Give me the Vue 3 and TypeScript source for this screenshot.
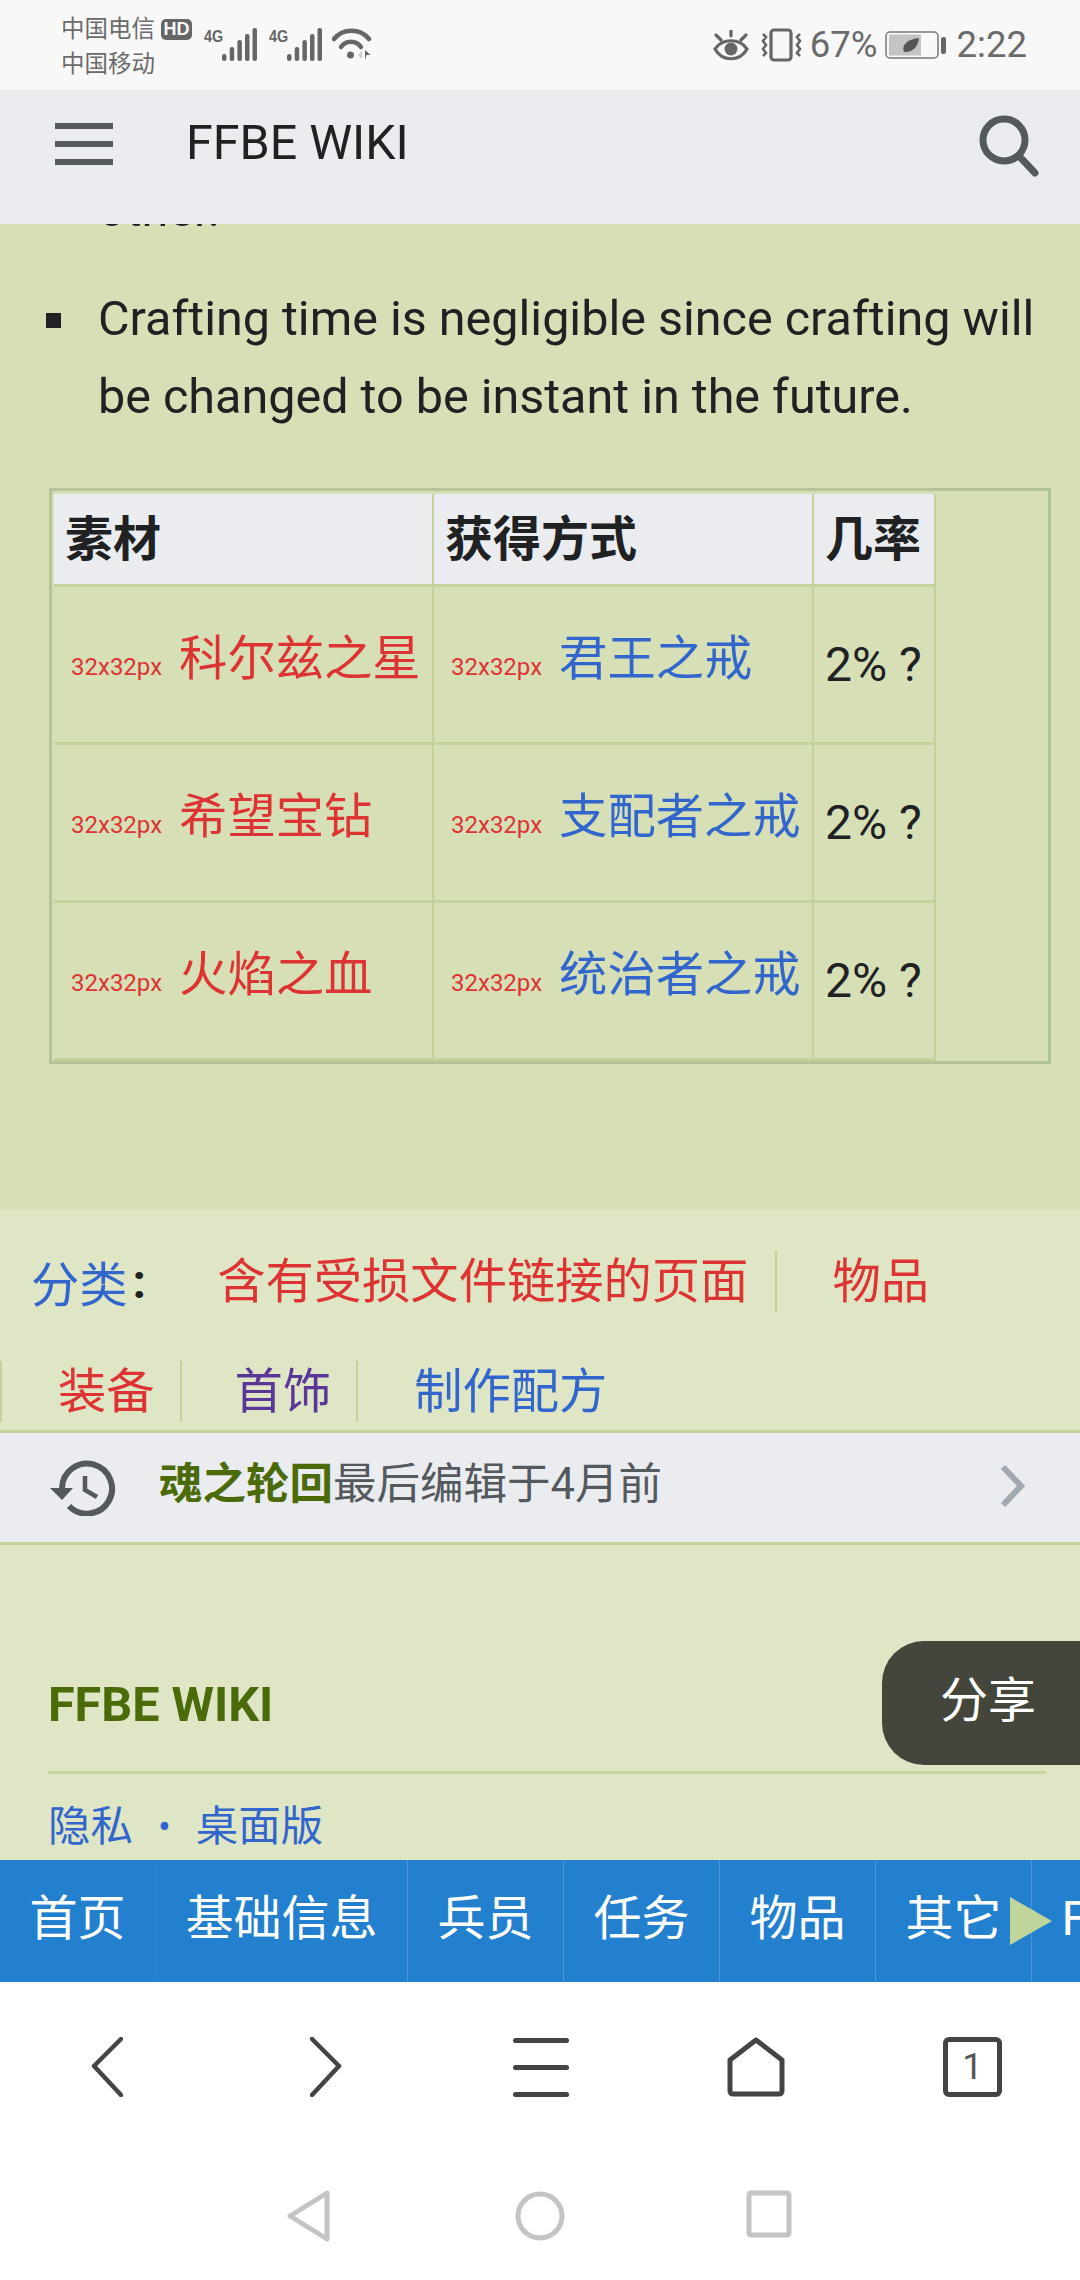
<script setup lang="ts">
interface Row {
  material: string;
  source: string;
}

const rows: Row[] = [
  { material: "科尔兹之星", source: "君王之戒" },
  { material: "希望宝钻", source: "支配者之戒" },
  { material: "火焰之血", source: "统治者之戒" },
];

const tabs: string[] = ["首页", "基础信息", "兵员", "任务", "物品", "其它", "FAQ"];
</script>

<template>
  <div class="page">
    <div class="status">
      <div class="carriers">
        <div class="carrier-line">中国电信<span class="hd">HD</span></div>
        <div class="carrier-line">中国移动</div>
      </div>
      <div class="net">
        <span class="g4">4G</span>
        <svg class="bars" width="35" height="33" viewBox="0 0 35 33" fill="#666">
          <rect x="0" y="26" width="4.5" height="7" rx="2.2" />
          <rect x="7.7" y="19" width="4.5" height="14" rx="2" />
          <rect x="15.4" y="12" width="4.5" height="21" rx="2" />
          <rect x="23" y="6" width="4.5" height="27" rx="2" />
          <rect x="30.5" y="0" width="4.5" height="33" rx="2" />
        </svg>
        <span class="g4 g4b">4G</span>
        <svg class="bars" width="35" height="33" viewBox="0 0 35 33" fill="#666">
          <rect x="0" y="26" width="4.5" height="7" rx="2.2" />
          <rect x="7.7" y="19" width="4.5" height="14" rx="2" />
          <rect x="15.4" y="12" width="4.5" height="21" rx="2" />
          <rect x="23" y="6" width="4.5" height="27" rx="2" />
          <rect x="30.5" y="0" width="4.5" height="33" rx="2" />
        </svg>
        <svg class="wifi" width="40" height="33" viewBox="0 0 40 33" fill="none" stroke="#666" stroke-width="4.5" stroke-linecap="round">
          <path d="M2 11C11 0 28 0 37 11" />
          <path d="M9 19C14 12 24 12 29 19" />
          <circle cx="18.5" cy="27" r="3.5" fill="#666" stroke="none" />
          <path d="M30 23l-4 4 4 4z" fill="#ccc" stroke="none" />
          <path d="M33 22v10l1.5-5h4z" fill="#666" stroke="none" />
        </svg>
      </div>
      <div class="status-right">
        <svg class="eye" width="36" height="31" viewBox="0 0 36 31" fill="none" stroke="#666" stroke-width="3.2">
          <path d="M2 19C9 8 27 8 34 19C27 32 9 32 2 19Z" />
          <circle cx="18" cy="19" r="6.5" fill="#666" stroke="none" />
          <path d="M18 0v6M3 5l5 5M33 5l-5 5" stroke-linecap="round" />
        </svg>
        <svg class="vib" width="41" height="34" viewBox="0 0 41 34" fill="none" stroke="#666" stroke-width="3.2">
          <rect x="10" y="2" width="20" height="30" rx="3" />
          <path d="M2 6l3 3-3 4 3 4-3 4 3 4-3 3M39 6l-3 3 3 4-3 4 3 4-3 4 3 3" stroke-width="2.6" />
        </svg>
        <span class="pct">67%</span>
        <svg class="batt" width="61" height="30" viewBox="0 0 61 30">
          <rect x="1" y="2" width="52" height="26" rx="4" fill="none" stroke="#777" stroke-width="1.5" />
          <rect x="4" y="4.500" width="32" height="21" fill="#c4c4c4" />
          <rect x="56" y="7" width="5" height="17" rx="2" fill="#666" />
          <path d="M19 22C16 14 24 9 34 8C33 17 27 23 19 22Z" fill="#555" />
        </svg>
        <span class="time">2:22</span>
      </div>
    </div>

    <header class="topbar">
      <div class="burger"><i></i><i></i><i></i></div>
      <div class="title">FFBE WIKI</div>
      <svg class="search" width="60" height="62" viewBox="0 0 60 62" fill="none" stroke="#54595d" stroke-width="7">
        <circle cx="25" cy="25" r="21" />
        <path d="M40 41l16 17" stroke-linecap="round" />
      </svg>
    </header>

    <main class="content">
      <ul class="notes">
        <li class="clipped">other.</li>
        <li>Crafting time is negligible since crafting will be changed to be instant in the future.</li>
      </ul>
      <div class="table-box">
        <table class="recipes">
          <thead>
            <tr>
              <th class="col-a">素材</th>
              <th class="col-b">获得方式</th>
              <th class="col-c">几率</th>
            </tr>
          </thead>
          <tbody>
            <tr v-for="row in rows" :key="row.material">
              <td class="item">
                <span class="alt">32x32px</span><span class="red">{{ row.material }}</span>
              </td>
              <td class="item">
                <span class="alt">32x32px</span><span class="blue">{{ row.source }}</span>
              </td>
              <td class="rate">2% ?</td>
            </tr>
          </tbody>
        </table>
      </div>
    </main>

    <section class="categories">
      <div class="cat-row cat-first">
        <span class="blue">分类</span><span class="colon">:</span>
        <span class="cat red sep">含有受损文件链接的页面</span>
        <span class="cat red">物品</span>
      </div>
      <div class="cat-row cat-second">
        <span class="cat red sep lead">装备</span>
        <span class="cat purple sep">首饰</span>
        <span class="cat blue cat-end">制作配方</span>
      </div>
    </section>

    <div class="edited">
      <svg class="history" width="66" height="56" viewBox="0 0 66 56" fill="none" stroke="#54595d" stroke-width="6">
        <path d="M12 28A25 25 0 1 1 19 46" />
        <path d="M0 28h23L12 40z" fill="#54595d" stroke="none" />
        <path d="M35 16v14l12 7" stroke-width="4.5" />
      </svg>
      <div class="edited-label"><span class="editor">魂之轮回</span><span class="edited-text">最后编辑于4月前</span></div>
      <svg class="chev" width="26" height="42" viewBox="0 0 26 42" fill="none" stroke="#a2a9b1" stroke-width="6">
        <path d="M4 2l18 19L4 40" />
      </svg>
    </div>

    <footer class="foot">
      <div class="foot-title">FFBE WIKI</div>
      <div class="foot-links"><span>隐私</span><span class="dot">•</span><span>桌面版</span></div>
      <div class="share">分享</div>
    </footer>

    <nav class="tabs">
      <div v-for="tab in tabs" :key="tab" class="tab">{{ tab }}</div>
      <div class="more"></div>
    </nav>

    <div class="browser">
      <svg width="32" height="60" viewBox="0 0 32 60" fill="none" stroke="#444" stroke-width="4.500" stroke-linecap="round" stroke-linejoin="round">
        <path d="M30 2L3 29l27 29" />
      </svg>
      <svg width="32" height="60" viewBox="0 0 32 60" fill="none" stroke="#444" stroke-width="4.500" stroke-linecap="round" stroke-linejoin="round">
        <path d="M2 2l27 27L2 58" />
      </svg>
      <svg width="58" height="60" viewBox="0 0 58 60" fill="#444">
        <rect x="1" y="1" width="56" height="5" rx="2.5" />
        <rect x="1" y="28" width="56" height="5" rx="2.5" />
        <rect x="1" y="55" width="56" height="5" rx="2.5" />
      </svg>
      <svg width="60" height="60" viewBox="0 0 60 60" fill="none" stroke="#444" stroke-width="5" stroke-linejoin="round">
        <path d="M29 3L3 23v31a3 3 0 0 0 3 3h46a3 3 0 0 0 3-3V23z" />
      </svg>
      <div class="tab-count">1</div>
    </div>

    <div class="android">
      <svg width="44" height="52" viewBox="0 0 44 52" fill="none" stroke="#c4c4c4" stroke-width="5" stroke-linejoin="round">
        <path d="M40 3L3 26l37 23z" />
      </svg>
      <svg width="50" height="52" viewBox="0 0 50 52" fill="none" stroke="#c4c4c4" stroke-width="5">
        <circle cx="25" cy="26" r="22" />
      </svg>
      <svg width="46" height="48" viewBox="0 0 46 48" fill="none" stroke="#c4c4c4" stroke-width="5">
        <rect x="3" y="3" width="40" height="42" rx="2" />
      </svg>
    </div>
  </div>
</template>

<style scoped>
.page {
  position: relative;
  width: 1080px;
  height: 2280px;
  overflow: hidden;
  display: flex;
  flex-direction: column;
  background: #fff;
  font-family: Roboto, "Noto Sans CJK SC", sans-serif;
  color: #202122;
}

.status {
  flex: none;
  height: 90px;
  background: #f8f8f8;
  display: flex;
  align-items: center;
  padding: 0 53px 0 61px;
  color: #6b6b6b;
}
.carriers {
  width: 132px;
  font-size: 23.5px;
  line-height: 35px;
  padding-top: 4px;
  white-space: nowrap;
}
.carrier-line {
  display: flex;
  align-items: center;
}
.hd {
  margin-left: 6px;
  width: 31px;
  height: 21px;
  flex: none;
  border-radius: 5px;
  background: #666;
  color: #f8f8f8;
  font: 700 18px/21px "Liberation Sans", sans-serif;
  text-align: center;
}
.net {
  display: flex;
  align-items: flex-end;
  margin-left: 11px;
  height: 33px;
  margin-top: -1px;
}
.g4 {
  font: 700 17px/18px "Liberation Sans", sans-serif;
  color: #666;
  width: 19px;
  transform: scaleX(0.85);
  transform-origin: left;
  align-self: flex-start;
  margin-right: -1px;
}
.g4b {
  margin-left: 12px;
}
.wifi {
  margin-left: 10px;
}
.status-right {
  margin-left: auto;
  display: flex;
  align-items: center;
  height: 34px;
}
.vib {
  margin-left: 12px;
}
.pct {
  margin-left: 8px;
  font-size: 36.5px;
  line-height: 34px;
}
.batt {
  margin-left: 7px;
}
.time {
  margin-left: 11px;
  font-size: 36.5px;
  line-height: 34px;
}

.topbar {
  flex: none;
  height: 134px;
  background: #eaecf0;
  display: flex;
  align-items: center;
  padding: 0 41px 0 55px;
}
.burger {
  width: 58px;
  display: flex;
  flex-direction: column;
  gap: 12px;
  margin-top: -26px;
}
.burger i {
  display: block;
  height: 6px;
  background: #54595d;
}
.title {
  margin-left: 73px;
  font-size: 48.4px;
  color: #202122;
  margin-top: -30px;
}
.search {
  margin-left: auto;
  margin-top: -22px;
}

.content {
  flex: none;
  height: 986px;
  overflow: hidden;
  background: #d7dfb7;
}
.notes {
  list-style: none;
  margin: -53px 28px 0 98px;
  padding: 0;
  font-size: 48.5px;
  line-height: 78px;
}
.notes li {
  position: relative;
}
.notes li::before {
  content: "";
  position: absolute;
  left: -52px;
  top: 33px;
  width: 15px;
  height: 15px;
  background: #202122;
}
.notes li.clipped {
  margin-bottom: 31px;
}
.notes li.clipped::before {
  display: none;
}
.table-box {
  margin: 52px 0 0 49px;
  width: 1002px;
  box-sizing: border-box;
  border: 3px solid #b4c49a;
  padding: 3px 0 0 2px;
}
.recipes {
  width: 882px;
  border-collapse: separate;
  border-spacing: 0;
  table-layout: fixed;
}
.recipes th {
  box-sizing: border-box;
  height: 93px;
  padding: 0 0 8px 11px;
  text-align: left;
  font-size: 48px;
  background: #eaecf0;
  border-right: 2px solid #c1d39b;
  border-bottom: 3px solid #c1d39b;
}
.recipes td {
  box-sizing: border-box;
  height: 158px;
  padding: 0 0 0 11px;
  border-right: 2px solid #c1d39b;
  border-bottom: 3px solid #c1d39b;
  white-space: nowrap;
}
.recipes td.item {
  padding-bottom: 22px;
}
.col-a,
.col-b {
  width: 380px;
}
.col-c {
  width: 122px;
}
.alt {
  font-size: 24px;
  color: #d33;
  margin: 0 17px 0 6px;
}
.red {
  color: #d33;
  font-size: 48.3px;
}
.blue {
  color: #36c;
  font-size: 48.3px;
}
.purple {
  color: #5a3696;
  font-size: 48.3px;
}
.rate {
  font-size: 48px;
}

.categories {
  flex: none;
  height: 220px;
  background: #dfe6c6;
  overflow: hidden;
}
.cat-row {
  display: flex;
  align-items: center;
  white-space: nowrap;
}
.cat-first {
  margin-top: 36px;
  padding-left: 31px;
}
.cat-second {
  margin-top: 45px;
}
.colon {
  font-size: 48px;
  font-weight: 700;
  margin: 0 71px 0 5px;
}
.cat {
  height: 61px;
  line-height: 61px;
}
.sep {
  padding-right: 27px;
  border-right: 2px solid #c1d39b;
  margin-right: 55px;
}
.cat-second .sep {
  padding-right: 25px;
  margin-right: 53px;
}
.cat-end {
  margin-left: 3px;
}
.lead {
  padding-left: 56px;
  border-left: 2px solid #c1d39b;
}

.edited {
  flex: none;
  height: 115px;
  box-sizing: border-box;
  border-top: 3px solid #c1d39b;
  border-bottom: 3px solid #c1d39b;
  background: #eaecf0;
  display: flex;
  align-items: center;
  padding: 0 55px 0 50px;
  font-size: 43.5px;
}
.edited-label {
  margin: 0 0 14px 43px;
}
.editor {
  font-weight: 700;
  color: #4b6b0a;
}
.edited-text {
  color: #54595d;
}
.chev {
  margin: -3px 0 0 auto;
}

.foot {
  flex: none;
  position: relative;
  height: 315px;
  box-sizing: border-box;
  background: #dfe6c6;
  padding: 0 34px 0 48px;
}
.foot-title {
  margin-top: 130px;
  font-size: 48.5px;
  font-weight: 700;
  color: #4b6b0a;
  line-height: 60px;
  padding-bottom: 36px;
  border-bottom: 3px solid #c5d59b;
}
.foot-links {
  margin-top: 27px;
  color: #36c;
  font-size: 42.5px;
  line-height: 52px;
  display: flex;
}
.dot {
  margin: 0 25px;
  font-size: 38px;
}
.share {
  position: absolute;
  right: 0;
  top: 96px;
  width: 198px;
  height: 124px;
  box-sizing: border-box;
  padding-left: 58px;
  border-radius: 42px 0 0 42px;
  background: #44463c;
  color: #fff;
  font-size: 48px;
  line-height: 120px;
}

.tabs {
  flex: none;
  position: relative;
  height: 122px;
  background: #2380cf;
  display: flex;
  overflow: hidden;
  color: #fff;
}
.tab {
  flex: none;
  padding: 0 29.5px;
  border-right: 1px solid #4b96d8;
  font-size: 48px;
  line-height: 118px;
  white-space: nowrap;
}
.tab:first-child {
  border-right-color: #2a84d1;
}
.more {
  position: absolute;
  left: 1010px;
  top: 37px;
  width: 0;
  height: 0;
  border-left: 42px solid #bfd59b;
  border-top: 24px solid transparent;
  border-bottom: 24px solid transparent;
}

.browser {
  flex: none;
  height: 180px;
  padding: 55px 0 0 91px;
  box-sizing: border-box;
  display: grid;
  grid-template-columns: 219px 202px 215px 216px 59px;
  align-items: start;
}
.tab-count {
  width: 59px;
  height: 60px;
  box-sizing: border-box;
  border: 5px solid #444;
  border-radius: 6px;
  color: #555;
  font-size: 36.5px;
  line-height: 49px;
  text-align: center;
}

.android {
  flex: none;
  height: 118px;
  display: grid;
  grid-template-columns: 228px 231px 46px;
  align-items: start;
  padding: 28px 0 0 287px;
  box-sizing: border-box;
}
</style>

<style>
html,
body {
  margin: 0;
  background: #fff;
}
</style>
